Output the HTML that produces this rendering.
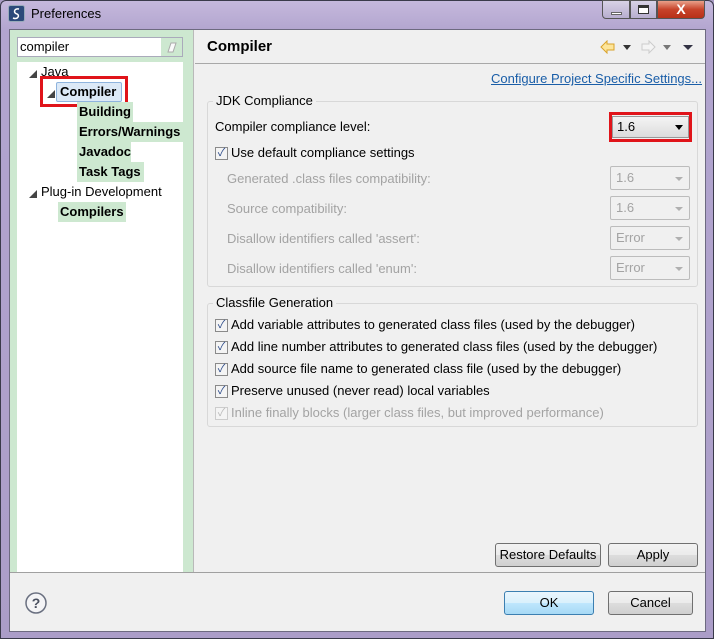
<!DOCTYPE html>
<html><head><meta charset="utf-8"><style>
*{margin:0;padding:0;box-sizing:border-box}
body{width:714px;height:639px;overflow:hidden;font-family:"Liberation Sans","Noto Sans CJK SC",sans-serif;font-size:13px;color:#000;background:#a99cc4;position:relative}
.a{position:absolute}
.frame{left:0;top:0;width:714px;height:639px;background:linear-gradient(#c5b8dc,#b2a5cf 30px,#ab9dc8);border:1px solid #3a3a4a;border-radius:6px 6px 0 0}
.content{left:9px;top:29px;width:697px;height:603px;background:#f0f0f0;border:1px solid #6d6a80}
.cb{width:13px;height:13px;border:1px solid #8a8a8a;background:#f4f4f4;font-size:11px;line-height:11px;text-align:center;color:#2c4b8a}
.dis{color:#a3a3a3}
.combo{width:80px;height:24px;border:1px solid #bcbcbc;border-radius:2px;background:#f0f0f0;padding:3px 5px;color:#a3a3a3}
.combo:after{content:"";position:absolute;right:6px;top:10px;border:4px solid transparent;border-top:4px solid #b0b0b0}
.btn{height:24px;border:1px solid #707070;border-radius:3px;background:linear-gradient(#f2f2f2,#ebebeb 50%,#dddddd 51%,#cfcfcf);text-align:center;line-height:22px}
.grp{border:1px solid #d8d8d8;border-radius:3px}
.leg{background:#f0f0f0;padding:0 3px}
.hl{background:#cde8d0;font-weight:bold;padding:0 2px}
</style></head><body>
<div class="a frame"></div>
<svg class="a" style="left:8px;top:5px" width="18" height="18"><rect x="0.5" y="0.5" width="16" height="16" rx="2" fill="#2b4a7a" stroke="#9ab"/><path d="M11 4 C6 3 5 8 9 9 C12 10 10 15 5 13" stroke="#fff" stroke-width="1.5" fill="none"/></svg>
<div class="a" style="left:31px;top:6px;font-size:13px">Preferences</div>
<div class="a" style="left:602px;top:0;width:28px;height:19px;background:linear-gradient(#d8d2e6,#b7aecf);border:1px solid #555;border-radius:0 0 0 4px"><div class="a" style="left:8px;top:11px;width:11px;height:3px;background:#fff;border:1px solid #666"></div></div>
<div class="a" style="left:630px;top:0;width:27px;height:19px;background:linear-gradient(#d8d2e6,#b7aecf);border:1px solid #555"><div class="a" style="left:7px;top:4px;width:11px;height:9px;border:1px solid #333;border-top-width:3px;background:#fff"></div></div>
<div class="a" style="left:657px;top:0;width:48px;height:19px;background:linear-gradient(#e9a08a,#c7432a 50%,#b83018);border:1px solid #555;border-radius:0 0 4px 0;color:#fff;font-weight:bold;text-align:center;line-height:17px;font-size:14px">X</div>
<div class="a content"></div>
<!-- left panel -->
<div class="a" style="left:10px;top:30px;width:183px;height:542px;background:#cde8d0"></div>
<div class="a" style="left:193px;top:30px;width:1px;height:542px;background:#b9b9b9"></div>
<div class="a" style="left:17px;top:37px;width:166px;height:20px;background:#fff;border:1px solid #aab"></div>
<div class="a" style="left:20px;top:39px">compiler</div>
<div class="a" style="left:161px;top:38px;width:21px;height:18px;background:#cde8d0"><svg width="21" height="18"><path d="M7 14 L10 5 L15 5 L12 14Z" fill="#fafafa" stroke="#aaa"/></svg></div>
<div class="a" style="left:17px;top:62px;width:166px;height:510px;background:#fff"></div>
<div class="a" style="left:29px;top:69px;font-size:8px;color:#444">◢</div>
<div class="a" style="left:41px;top:64px">Java</div>
<div class="a" style="left:47px;top:89px;font-size:8px;color:#444">◢</div>
<div class="a" style="left:56px;top:82px;width:66px;height:20px;background:#dce9f7;border:1px solid #8fb4de;border-radius:2px"></div>
<div class="a" style="left:60px;top:84px;font-weight:bold">Compiler</div>
<div class="a" style="left:40px;top:76px;width:88px;height:31px;border:3px solid #e0141a"></div>
<div class="a hl" style="left:77px;top:102px;height:20px;line-height:20px;width:56px">Building</div>
<div class="a hl" style="left:77px;top:122px;height:20px;line-height:20px;width:106px">Errors/Warnings</div>
<div class="a hl" style="left:77px;top:142px;height:20px;line-height:20px;width:54px">Javadoc</div>
<div class="a hl" style="left:77px;top:162px;height:20px;line-height:20px;width:67px">Task Tags</div>
<div class="a" style="left:29px;top:189px;font-size:8px;color:#444">◢</div>
<div class="a" style="left:41px;top:184px">Plug-in Development</div>
<div class="a hl" style="left:58px;top:202px;height:20px;line-height:20px;width:68px">Compilers</div>
<!-- right -->
<div class="a" style="left:207px;top:38px;font-size:15px;font-weight:bold">Compiler</div>
<div class="a" style="left:195px;top:63px;width:510px;height:1px;background:#a8a8a8"></div>
<svg class="a" style="left:600px;top:40px" width="100" height="14"><path d="M1 7 L7 1 L7 4 L14 4 L14 10 L7 10 L7 13Z" fill="#fde59a" stroke="#d9a22a"/><path d="M23 5 L31 5 L27 10Z" fill="#333"/><path d="M55 7 L49 1 L49 4 L42 4 L42 10 L49 10 L49 13Z" fill="#f4f4f4" stroke="#ccc"/><path d="M63 5 L71 5 L67 10Z" fill="#777"/><path d="M83 5 L93 5 L88 10Z" fill="#334"/></svg>
<div class="a" style="left:491px;top:71px;color:#1a5ea8;text-decoration:underline">Configure Project Specific Settings...</div>
<div class="a grp" style="left:207px;top:101px;width:491px;height:186px"></div>
<div class="a leg" style="left:213px;top:93px">JDK Compliance</div>
<div class="a" style="left:215px;top:119px">Compiler compliance level:</div>
<div class="a" style="left:612px;top:116px;width:77px;height:22px;border:1px solid #999;background:linear-gradient(#f4f4f4,#dcdcdc);padding:2px 4px">1.6<span class="a" style="right:5px;top:8px;border:4px solid transparent;border-top:5px solid #000"></span></div>
<div class="a" style="left:609px;top:112px;width:83px;height:30px;border:3px solid #e0141a"></div>
<div class="a cb" style="left:215px;top:147px">✓</div>
<div class="a" style="left:231px;top:145px">Use default compliance settings</div>
<div class="a dis" style="left:227px;top:171px">Generated .class files compatibility:</div>
<div class="a combo" style="left:610px;top:166px">1.6</div>
<div class="a dis" style="left:227px;top:201px">Source compatibility:</div>
<div class="a combo" style="left:610px;top:196px">1.6</div>
<div class="a dis" style="left:227px;top:231px">Disallow identifiers called 'assert':</div>
<div class="a combo" style="left:610px;top:226px">Error</div>
<div class="a dis" style="left:227px;top:261px">Disallow identifiers called 'enum':</div>
<div class="a combo" style="left:610px;top:256px">Error</div>
<div class="a grp" style="left:207px;top:303px;width:491px;height:124px"></div>
<div class="a leg" style="left:213px;top:295px">Classfile Generation</div>
<div class="a cb" style="left:215px;top:319px">✓</div><div class="a" style="left:231px;top:317px">Add variable attributes to generated class files (used by the debugger)</div>
<div class="a cb" style="left:215px;top:341px">✓</div><div class="a" style="left:231px;top:339px">Add line number attributes to generated class files (used by the debugger)</div>
<div class="a cb" style="left:215px;top:363px">✓</div><div class="a" style="left:231px;top:361px">Add source file name to generated class file (used by the debugger)</div>
<div class="a cb" style="left:215px;top:385px">✓</div><div class="a" style="left:231px;top:383px">Preserve unused (never read) local variables</div>
<div class="a cb" style="left:215px;top:407px;color:#bbb;border-color:#ccc">✓</div><div class="a dis" style="left:231px;top:405px">Inline finally blocks (larger class files, but improved performance)</div>
<div class="a btn" style="left:495px;top:543px;width:106px">Restore Defaults</div>
<div class="a btn" style="left:608px;top:543px;width:90px">Apply</div>
<div class="a" style="left:10px;top:572px;width:695px;height:1px;background:#a0a0a0"></div>
<svg class="a" style="left:24px;top:591px" width="24" height="24"><circle cx="12" cy="12" r="10" fill="#f4f4f6" stroke="#6a7080" stroke-width="1.5"/><text x="12" y="17" text-anchor="middle" font-family="Liberation Sans" font-weight="bold" font-size="14" fill="#4a5060">?</text></svg>
<div class="a btn" style="left:504px;top:591px;width:90px;border-color:#3c7fb1;background:linear-gradient(#eaf6fd,#d9f0fc 50%,#bee6fd 51%,#a7d9f5)">OK</div>
<div class="a btn" style="left:608px;top:591px;width:85px">Cancel</div>
</body></html>
